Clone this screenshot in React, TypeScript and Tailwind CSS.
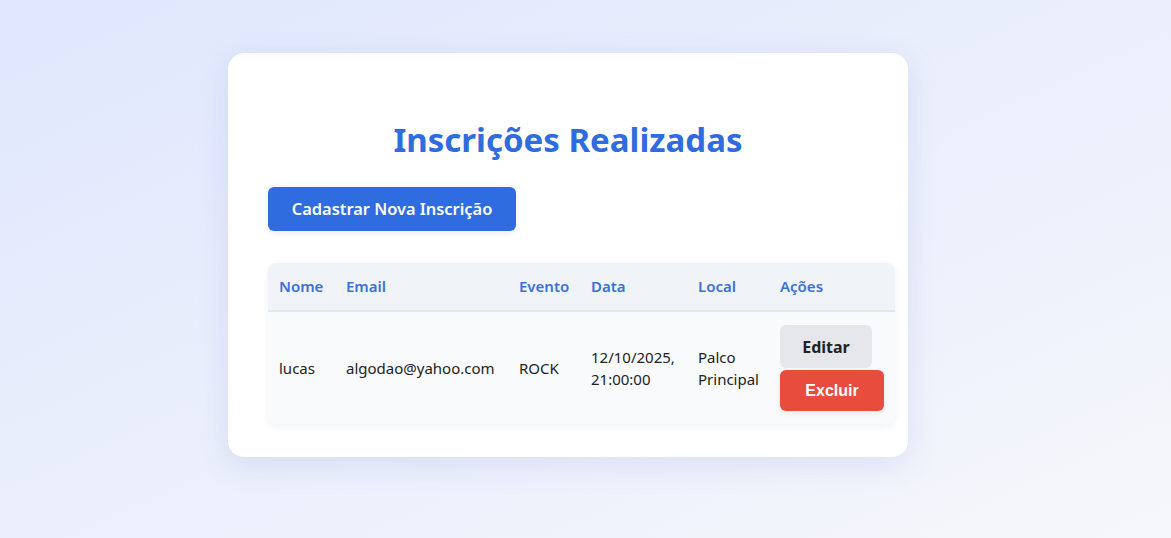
import React from "react";

export default function App() {
  const font = { fontFamily: '"Noto Sans", "Open Sans", sans-serif' };
  return (
    <div
      className="min-h-screen w-full bg-gradient-to-br from-[#e0e7fd] to-[#f6f7fb] pt-[53px] pl-[228px]"
      style={font}
    >
      <div className="w-[680px] rounded-[16px] bg-white px-10 pt-10 pb-[33px] shadow-[0_8px_32px_rgba(70,90,190,0.13)]">
        <h2 className="my-[27px] h-10 text-center text-[33px] font-bold leading-10 text-[#2f6ce0]">
          Inscrições Realizadas
        </h2>
        <button className="h-[44px] w-[248px] rounded-[6px] bg-[#2f6ce0] text-[16.4px] font-semibold text-white shadow-[0_2px_6px_rgba(0,0,0,0.08)]">
          Cadastrar Nova Inscrição
        </button>
        <div className="mt-8 w-[627px] overflow-hidden rounded-[8px] bg-[#f8fafc] shadow-[0_2px_8px_rgba(0,0,0,0.06)]">
          <table className="w-[627px] table-fixed border-collapse text-[15px] text-[#222]">
            <colgroup>
              <col className="w-[66px]" />
              <col className="w-[173px]" />
              <col className="w-[72px]" />
              <col className="w-[107px]" />
              <col className="w-[82px]" />
              <col className="w-[127px]" />
            </colgroup>
            <thead>
              <tr className="h-[48px] border-b-2 border-[#e3e7ee] bg-[#f0f4f9] text-left text-[#3a70dc]">
                <th className="px-[11px] font-semibold">Nome</th>
                <th className="px-[12px] font-semibold">Email</th>
                <th className="px-[12px] font-semibold">Evento</th>
                <th className="px-[12px] font-semibold">Data</th>
                <th className="px-[12px] font-semibold">Local</th>
                <th className="px-[12px] font-semibold">Ações</th>
              </tr>
            </thead>
            <tbody>
              <tr className="h-[113px] leading-[22px]">
                <td className="px-[11px]">lucas</td>
                <td className="px-[12px] whitespace-nowrap">algodao@yahoo.com</td>
                <td className="px-[12px]">ROCK</td>
                <td className="px-[12px]">12/10/2025, 21:00:00</td>
                <td className="px-[12px]">Palco Principal</td>
                <td className="px-[12px]">
                  <div className="flex flex-col items-start gap-[2px]">
                    <button className="h-[43px] w-[92px] rounded-[6px] bg-[#e5e7eb] text-[16px] font-bold text-[#222]">
                      Editar
                    </button>
                    <button
                      className="h-[41px] w-[104px] rounded-[6px] bg-[#e74c3c] text-[16px] font-bold text-white shadow-[0_2px_6px_rgba(0,0,0,0.08)]"
                      style={{ fontFamily: '"Liberation Sans", Arial, sans-serif' }}
                    >
                      Excluir
                    </button>
                  </div>
                </td>
              </tr>
            </tbody>
          </table>
        </div>
      </div>
    </div>
  );
}
